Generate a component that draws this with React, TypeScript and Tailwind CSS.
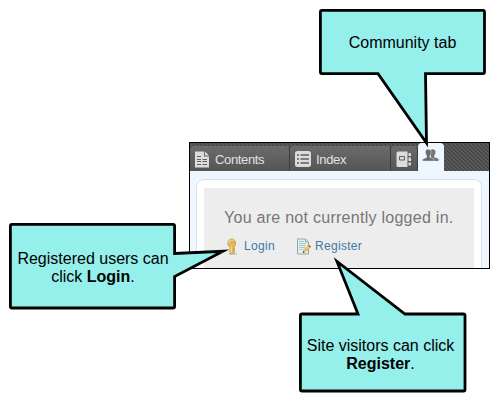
import React from "react";

const hatch =
  "bg-[#4c4c4c] bg-[repeating-linear-gradient(45deg,#454545_0px,#454545_1.1px,#5a5a5a_1.7px,#5a5a5a_2.83px)]";
const tab =
  "mt-[3px] flex h-[25px] items-center rounded-t-[4px] border-r border-t border-r-[#3c3c3c] border-t-[#6c6c6c] bg-linear-to-b from-[#6a6a6a] to-[#555555]";

function ContentsIcon() {
  return (
    <svg width="16" height="17" viewBox="0 0 16 17" className="shrink-0">
      <path d="M0 .5h9v5h5v11H0z" fill="#dcdcdc" />
      <path d="M10 .5l4 4h-4z" fill="#dcdcdc" />
      <path d="M2 5.500h4M2 8.500h4M2 10.500h4M2 13.500h4M7.500 8.500h4.500M7.500 10.500h4.500M7.500 13.500h4.500" stroke="#606060" />
    </svg>
  );
}

function IndexIcon() {
  return (
    <svg width="16" height="16" viewBox="0 0 16 16" className="shrink-0">
      <rect width="16" height="16" rx="2.500" fill="#dcdcdc" />
      <path d="M2 4h2M2 8h2M2 12h2M5.500 4h8.500M5.500 8h8.500M5.500 12h8.500" stroke="#606060" strokeWidth="1.700" />
    </svg>
  );
}

function GlossaryIcon() {
  return (
    <svg width="16" height="17" viewBox="0 0 16 17" className="shrink-0">
      <path d="M2 .5h9.500v15.500H2a1.500 1.500 0 0 1-1.500-1.500V2A1.500 1.500 0 0 1 2 .5z" fill="#dcdcdc" />
      <path d="M3.500 5.500h5v3.500h-5z" fill="none" stroke="#606060" />
      <path d="M12.500 2H14a1 1 0 0 1 1 1v2h-2.500zM12.500 6.500H15v3.500h-2.500zM12.500 11.500H15v2a1 1 0 0 1-1 1h-1.500z" fill="#dcdcdc" />
    </svg>
  );
}

function CommunityIcon() {
  return (
    <svg width="17" height="13" viewBox="0 0 17 13" className="shrink-0">
      <path d="M8.500 1.500C9.500-.3 13.200 0 13.400 2.500c.2 2-.4 3.200-1.200 4.100v1.600l4.300 1.600V12H9z" fill="#777" />
      <path d="M3.500 3C3.500.8 4.800.2 6.300.2S9.200 1 9.100 3.200C9 5 8.600 6 7.900 6.800v1.700l4.100 1.700V12H.5v-1.800l4.200-1.700V6.800C3.900 5.800 3.500 4.500 3.500 3z" fill="#6a6a6a" stroke="#eef6ff" strokeWidth=".4" />
    </svg>
  );
}

function KeyIcon() {
  return (
    <svg width="12" height="17" viewBox="0 0 12 17" className="shrink-0">
      <ellipse cx="7" cy="16" rx="4.500" ry=".9" fill="#c8c8c8" />
      <path d="M6 .8a4.600 4.600 0 0 0-2 8.500V15l1.500 1.200L7 15l1.500-.5v-1.800H7.200v-1H8.500V9.800H7.500V9.200A4.600 4.600 0 0 0 6 .8z" fill="#e6bd55" stroke="#c29a45" strokeWidth=".9" />
      <path d="M2.800 4.500C3.300 2.300 6 1.500 8 2.600" stroke="#f8e5a0" strokeWidth="1.200" fill="none" />
      <ellipse cx="6" cy="3.800" rx="1.500" ry="1" fill="#f3eedf" stroke="#a47825" strokeWidth=".6" />
      <path d="M5.400 8.500V15" stroke="#f7e09a" />
    </svg>
  );
}

function RegisterIcon() {
  return (
    <svg width="16" height="17" viewBox="0 0 16 17" className="shrink-0">
      <path d="M1.500 1h8l3 3v12h-11z" fill="#e4f0ef" stroke="#91a7a5" />
      <path d="M9.500 1v3h3" fill="#d1dedd" stroke="#91a7a5" />
      <path d="M3 3.500h5M3 5.500h7M3 7.500h7M3 9.500h6M3 11.500h4" stroke="#adc5cc" />
      <path d="M7 14.500l.7-2.500 4.800-4.500 1.800 1.800-4.800 4.500z" fill="#f2c94d" stroke="#b8963c" strokeWidth=".5" />
      <path d="M12.200 7.700l1-.9 1.900 1.900-1 .9z" fill="#e0403a" />
      <path d="M6.800 14.900l.5-1.700 1.200 1.100z" fill="#222" />
    </svg>
  );
}

function CalloutShape({ d }: { d: string }) {
  return (
    <svg width="490" height="401" viewBox="0 0 490 401" className="pointer-events-none absolute left-0 top-0">
      <path d={d} fill="#95efeb" stroke="#000" strokeWidth="2.800" strokeLinejoin="miter" strokeMiterlimit="6" />
    </svg>
  );
}

export default function App() {
  return (
    <div className="relative h-[401px] w-[490px] overflow-hidden bg-white pl-[189px] pt-[142px] font-['Liberation_Sans',Arial,sans-serif]">
      <main className="h-[127px] w-[301px] overflow-hidden border border-black bg-[#eef6ff]">
        <nav className={`flex h-[28px] text-[13px] text-[#e2e2e2] ${hatch}`}>
          <div className={`${tab} w-[100px] gap-[4px] pl-[5px]`}>
            <ContentsIcon />
            <span className="pt-[2px] tracking-[-0.35px]">Contents</span>
          </div>
          <div className={`${tab} w-[101px] gap-[5px] pl-[5px]`}>
            <IndexIcon />
            <span className="pt-[2px] tracking-[-0.35px]">Index</span>
          </div>
          <div className={`${tab} w-[27px] pl-[5px]`}>
            <GlossaryIcon />
          </div>
          <div className="flex h-[28px] w-[26px] rounded-t-[4px] bg-[#eef6ff] pl-[4px] pt-[6px]">
            <CommunityIcon />
          </div>
        </nav>
        <section className="ml-[6px] mt-[8px] h-[100px] w-[286px] rounded-t-[8px] border border-[#dce1e8] bg-white pl-[7px] pt-[8px]">
          <div className="h-[90px] w-[270px] bg-[#ededed] pl-[20px] pt-[20px]">
            <h1 className="whitespace-nowrap text-[16px] leading-[20px] tracking-[0.27px] text-[#777]">You are not currently logged in.</h1>
            <div className="mt-[9px] flex h-[18px] items-center text-[12px] text-[#4179a5]">
              <div className="flex w-[72px] items-center gap-[6px] pl-[2px]">
                <KeyIcon />
                <span className="tracking-[0.35px]">Login</span>
              </div>
              <div className="flex items-center gap-[3px]">
                <RegisterIcon />
                <span className="tracking-[0.3px]">Register</span>
              </div>
            </div>
          </div>
        </section>
      </main>
      <CalloutShape d="M322 10.400H483Q484.500 10.400 484.500 12V72Q484.500 73.600 483 73.600H425.500L426.500 143L378 73.600H322Q320.400 73.600 320.400 72V12Q320.400 10.400 322 10.400Z" />
      <CalloutShape d="M12 224.400H173Q174.600 224.400 174.600 226V253.500L223 251.300L174.600 276.500V306.500Q174.600 308 173 308H12Q10.400 308 10.400 306.500V226Q10.400 224.400 12 224.400Z" />
      <CalloutShape d="M302 314H358L337 261.500L405 314H463.500Q465 314 465 315.500V389.500Q465 391 463.500 391H302Q300.400 391 300.400 389.500V315.500Q300.400 314 302 314Z" />
      <div className="absolute left-[320px] top-[10px] flex h-[66px] w-[165px] items-center justify-center text-[16px] leading-[18px] text-black">
        Community tab
      </div>
      <div className="absolute left-[9px] top-[224px] flex h-[88px] w-[168px] items-center justify-center whitespace-nowrap text-center text-[16px] leading-[18px] text-black">
        <p>Registered users can<br />click <b>Login</b>.</p>
      </div>
      <div className="absolute left-[299px] top-[313px] flex h-[83px] w-[163px] items-center justify-center whitespace-nowrap text-center text-[16px] leading-[18px] text-black">
        <p>Site visitors can click<br /><b>Register</b>.</p>
      </div>
    </div>
  );
}
